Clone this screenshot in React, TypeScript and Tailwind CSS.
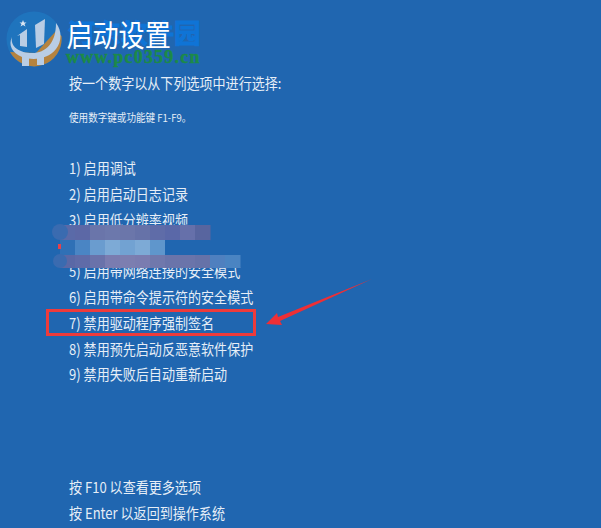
const options = [
  "1) 启用调试",
  "2) 启用启动日志记录",
  "3) 启用低分辨率视频",
  "4) 启用安全模式",
  "5) 启用带网络连接的安全模式",
  "6) 启用带命令提示符的安全模式",
  "7) 禁用驱动程序强制签名",
  "8) 禁用预先启动反恶意软件保护",
  "9) 禁用失败后自动重新启动",
];

// mosaic colours, one row per band, each cell 15px wide
const mosaic = [
  ["#5a6aa8", "#5c68a6", "#6a75aa", "#6c78ac", "#6b76aa", "#6672a8", "#5f6ca8", "#5a68a8", "#6670aa", "#58659f"],
  ["#2f70b6", "#4a85c4", "#6a9ccf", "#7daad6", "#72a2d2", "#7daad6", "#5f96cc", "#2066b0", "#2066b0", "#2066b0"],
  ["#5a68a6", "#5f6ba8", "#6a72aa", "#7a7cb0", "#7c7eb0", "#7a7cb0", "#7078ac", "#6a74aa", "#6a74aa", "#6672a8", "#4f80bf", "#4a84c2"],
];

function Logo() {
  return (
    <svg viewBox="0 0 56 56" className="absolute left-[6px] top-[11px] h-[56px] w-[56px]">
      <circle cx="28" cy="28" r="27.5" fill="#1f74bd" />
      <path d="M4 41 A27.5 27.5 0 0 0 55.5 25 L50 20 L30 42 Z" fill="#b5833f" />
      <path d="M6 26 C4 36 14 42 26 42 C40 42 50 32 50 12 C56 20 56 30 50 38 C42 48 28 50 16 46 C6 42 2 34 6 26 Z" fill="#b9cde4" />
      <rect x="16" y="43" width="7" height="12" fill="#b9cde4" />
      <rect x="31" y="43" width="7" height="11" fill="#b9cde4" />
      <path d="M11 25 L21 18 L21 36 L14 35 L14 24 Z" fill="#b9cde4" />
      <path d="M29 14 L39 8 L38 33 L30 37 Z" fill="#b9cde4" />
      <path d="M17 9 L18 11.5 L20.5 11.5 L18.5 13 L19.5 15.5 L17 14 L14.5 15.5 L15.5 13 L13.5 11.5 L16 11.5 Z" fill="#dbe6f2" />
    </svg>
  );
}

export default function App() {
  return (
    <div className="relative h-[528px] w-[601px] overflow-hidden bg-[#2066b0] pl-[69px] font-['Noto_Sans_CJK_SC','Noto_Sans',sans-serif] text-[#e6eef7]">
      <Logo />
      <div className="absolute left-[68px] top-[14px] text-[26.5px] font-bold leading-[36px] text-[#0f74d6] [-webkit-text-stroke:1px_#0f74d6]">
        河东软件园
      </div>
      <div className="origin-left scale-x-[0.87]">
        <h1 className="relative -ml-[3px] pt-[13px] text-[30px] font-normal leading-[40px] text-white">启动设置</h1>
        <p className="mt-[18px] text-[15px] leading-[24px]">按一个数字以从下列选项中进行选择:</p>
        <p className="mt-[13px] text-[11px] leading-[18px]">使用数字键或功能键 F1-F9。</p>
        <ul className="mt-[29px] flex flex-col text-[15px] leading-[25.8px]">
          {options.map((o) => (
            <li key={o}>{o}</li>
          ))}
        </ul>
        <div className="mt-[87px] flex flex-col text-[15px] leading-[26px]">
          <p>按 F10 以查看更多选项</p>
          <p>按 Enter 以返回到操作系统</p>
        </div>
      </div>
      <div className="absolute left-[66px] top-[48px] font-['Liberation_Serif',serif] text-[18px] font-bold leading-[18px] tracking-[1.2px] text-[#1c8a48] [-webkit-text-stroke:0.4px_#1c8a48]">
        www.pc0359.cn
      </div>

      <svg viewBox="0 0 200 48" className="absolute left-[50px] top-[223px] h-[48px] w-[200px]">
        <path d="M93 5 Q105 9 116 5 L116 7 Q105 11 93 7 Z" fill="#e8404a" />
        {mosaic.map((row, r) =>
          row.map((c, i) => (
            <rect key={`${r}-${i}`} x={10 + i * 15} y={2 + r * 15} width="15.5" height={r === 2 ? 13 : 15.5} fill={c} />
          ))
        )}
        <circle cx="10" cy="9" r="8" fill="#3a6bb0" />
        <circle cx="10" cy="38" r="7" fill="#3a6bb0" />
        <rect x="8" y="21" width="3" height="5" fill="#e8404a" />
      </svg>

      <div className="absolute left-[46px] top-[309px] h-[27px] w-[210px] border-[3px] border-[#ee3b3b]" />
      <svg viewBox="0 0 140 70" className="absolute left-[262px] top-[275px] h-[70px] w-[140px]">
        <path d="M4 49 L15 38 L16 42 L110 4 L18 46 L20 50 Z" fill="#ee2f35" />
      </svg>
    </div>
  );
}
